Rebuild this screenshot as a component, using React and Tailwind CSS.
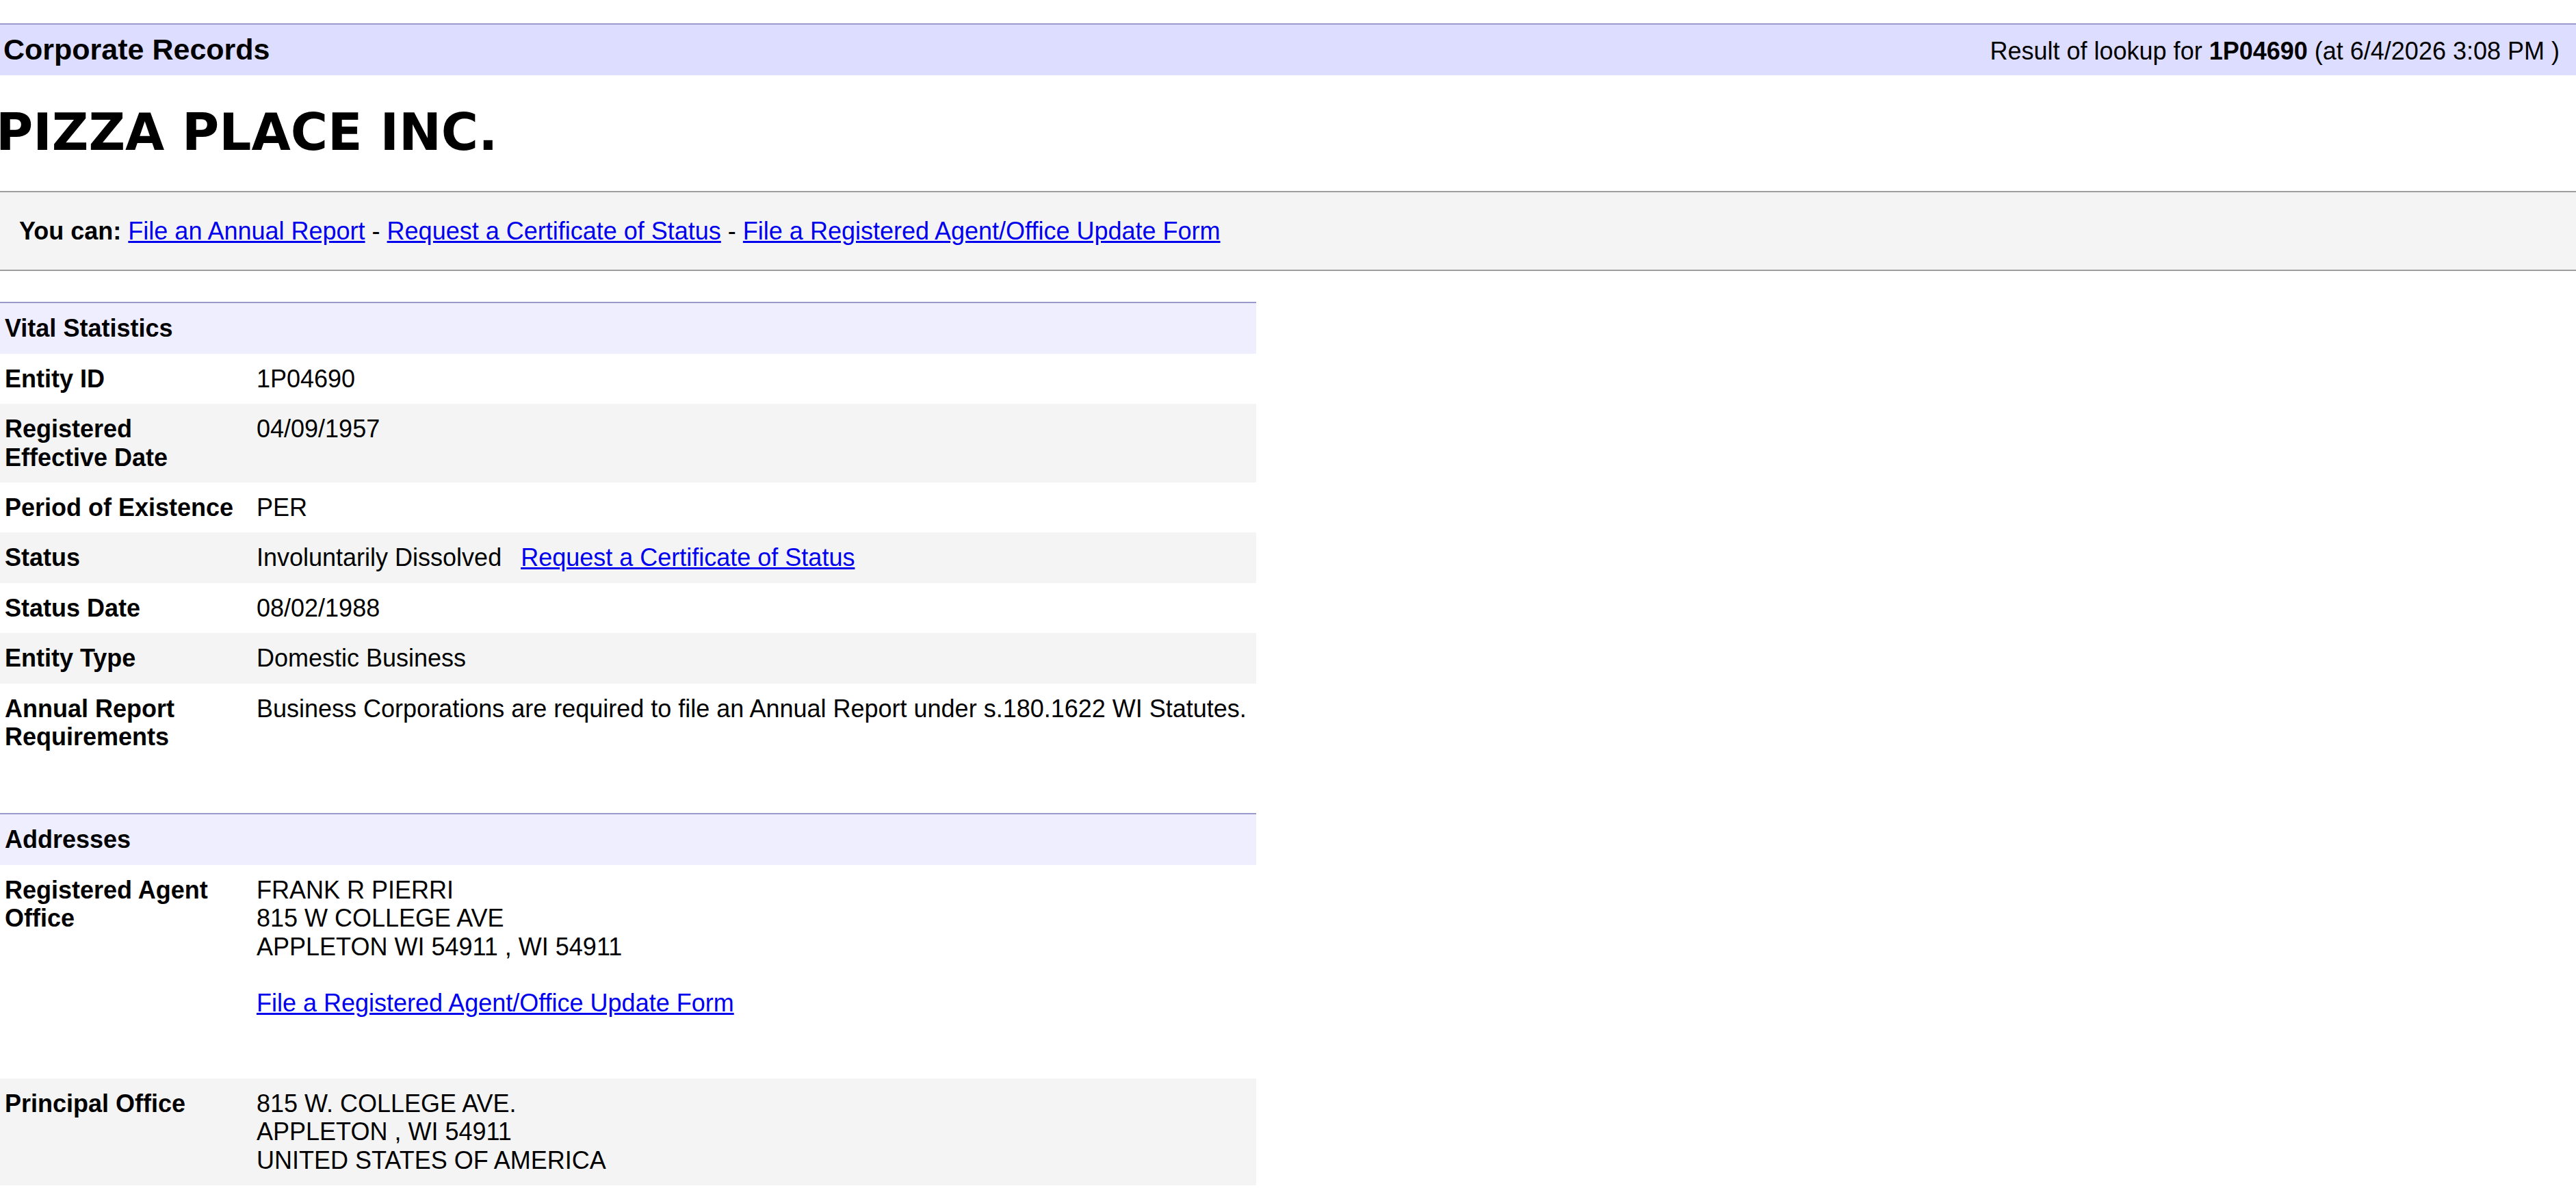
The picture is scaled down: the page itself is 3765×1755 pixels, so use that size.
export default function App() {
  const Row = ({ label, gray, children, valueClass }) => (
    <div className={gray ? "grid grid-cols-[368px_1fr] bg-[#f4f4f4]" : "grid grid-cols-[368px_1fr] bg-white"}>
      <div className="pl-[7px] pr-[21px] py-[16px] font-bold">{label}</div>
      <div className={valueClass || "px-[7px] py-[16px]"}>{children}</div>
    </div>
  );

  const SectionHead = ({ children }) => (
    <div className="border-t-2 border-[#9999cc] bg-[#eeeeff] px-[7px] py-[16px] font-bold">{children}</div>
  );

  const link = "text-[#0000ee] underline";

  return (
    <div className="min-h-screen w-full bg-white text-black font-['Liberation_Sans',Arial,sans-serif] text-[36px] leading-[41.4px]">
      {/* Top bar */}
      <div className="mt-[34px] flex h-[76px] items-baseline justify-between border-t-2 border-[#9999cc] bg-[#ddddff] pl-[5px] pr-[24px] pt-[12px]">
        <div className="text-[43px] font-bold leading-[48px]">Corporate Records</div>
        <div className="text-[36px] leading-[41.4px]">
          Result of lookup for <b>1P04690</b> (at 6/4/2026 3:08 PM )
        </div>
      </div>

      {/* Title */}
      <h1 className="mt-[41px] mb-[44px] ml-[-6px] font-['DejaVu_Sans',Verdana,sans-serif] text-[74px] font-bold leading-[84px]">
        PIZZA PLACE INC.
      </h1>

      {/* You can */}
      <div className="border-y-2 border-[#9e9e9e] bg-[#f4f4f4] py-[36px] pl-[28px]">
        <b>You can:</b> <a className={link} href="#">File an Annual Report</a> -{" "}
        <a className={link} href="#">Request a Certificate of Status</a> -{" "}
        <a className={link} href="#">File a Registered Agent/Office Update Form</a>
      </div>

      {/* Vital statistics */}
      <div className="mt-[45px] w-[1836px]">
        <SectionHead>Vital Statistics</SectionHead>
        <Row label="Entity ID">1P04690</Row>
        <Row label="Registered Effective Date" gray>04/09/1957</Row>
        <Row label="Period of Existence">PER</Row>
        <Row label="Status" gray>
          Involuntarily Dissolved
          <a className="ml-[28px] text-[#0000ee] underline" href="#">Request a Certificate of Status</a>
        </Row>
        <Row label="Status Date">08/02/1988</Row>
        <Row label="Entity Type" gray>Domestic Business</Row>
        <Row label="Annual Report Requirements">
          <span className="whitespace-nowrap">
            Business Corporations are required to file an Annual Report under s.180.1622 WI Statutes.
          </span>
        </Row>
      </div>

      {/* Addresses */}
      <div className="mt-[75px] w-[1836px]">
        <SectionHead>Addresses</SectionHead>
        <Row label="Registered Agent Office" valueClass="px-[7px] pt-[16px] pb-[89px]">
          <div>FRANK R PIERRI</div>
          <div>815 W COLLEGE AVE</div>
          <div>APPLETON WI 54911 , WI 54911</div>
          <div className="mt-[41.4px]">
            <a className={link} href="#">File a Registered Agent/Office Update Form</a>
          </div>
        </Row>
        <Row label="Principal Office" gray>
          <div>815 W. COLLEGE AVE.</div>
          <div>APPLETON , WI 54911</div>
          <div>UNITED STATES OF AMERICA</div>
        </Row>
      </div>
    </div>
  );
}
